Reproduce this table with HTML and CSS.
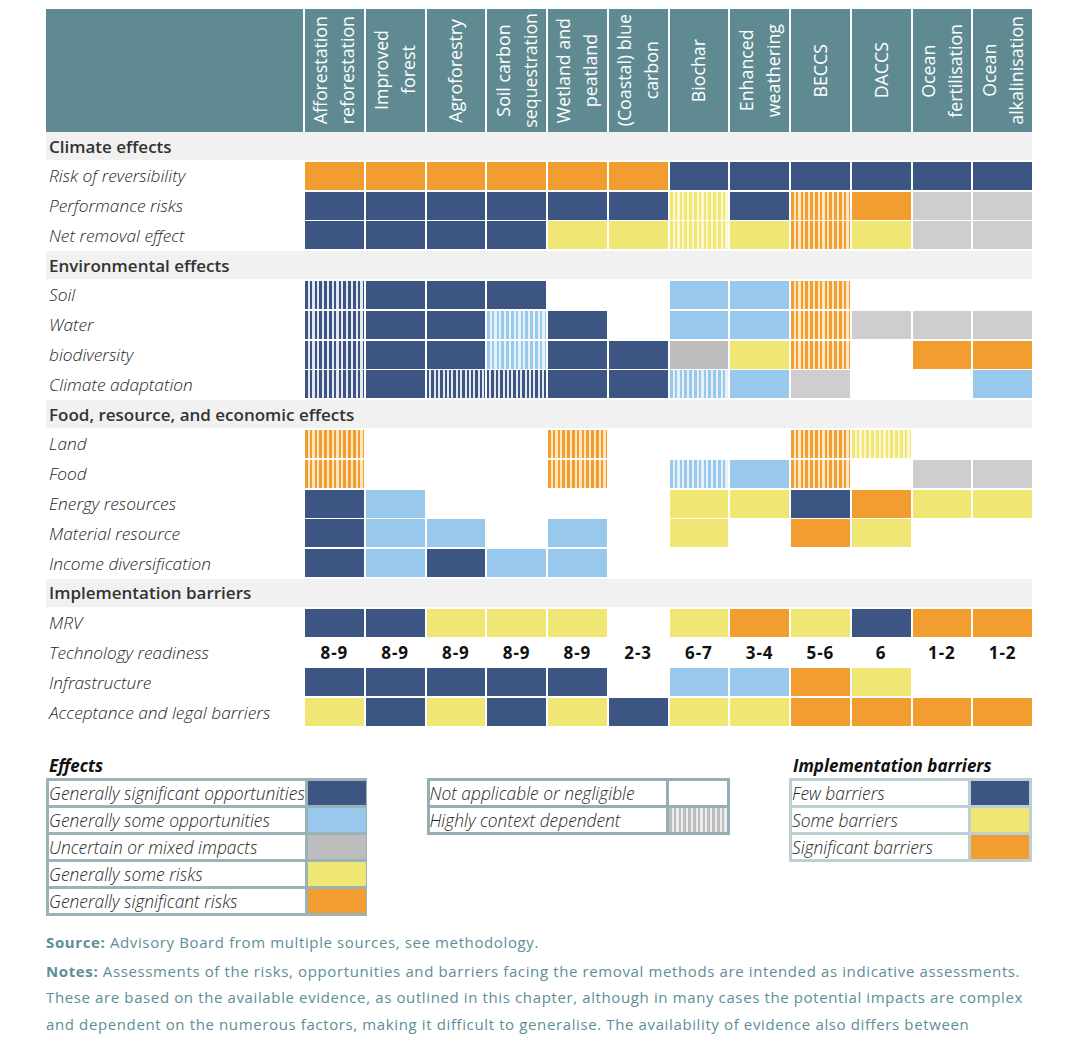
FILE: index.html
```html
<!DOCTYPE html>
<html lang="en">
<head>
<meta charset="utf-8">
<title>Removal methods assessment</title>
<link rel="stylesheet" href="styles.css">
</head>
<body>
<div class="page">
  <div class="matrix">
    <div class="head">
      <div></div>
      <div><span>Afforestation<br>reforestation</span></div>
      <div><span>Improved<br>forest</span></div>
      <div><span>Agroforestry</span></div>
      <div><span>Soil carbon<br>sequestration</span></div>
      <div><span>Wetland and<br>peatland</span></div>
      <div><span>(Coastal) blue<br>carbon</span></div>
      <div><span>Biochar</span></div>
      <div><span>Enhanced<br>weathering</span></div>
      <div><span>BECCS</span></div>
      <div><span>DACCS</span></div>
      <div><span>Ocean<br>fertilisation</span></div>
      <div><span>Ocean<br>alkalinisation</span></div>
    </div>
    <div class="body">
      <div class="band">Climate effects</div>

      <div class="lab">Risk of reversibility</div>
      <div class="o"></div><div class="o"></div><div class="o"></div><div class="o"></div><div class="o"></div><div class="o"></div>
      <div class="d"></div><div class="d"></div><div class="d"></div><div class="d"></div><div class="d"></div><div class="d"></div>

      <div class="lab">Performance risks</div>
      <div class="d"></div><div class="d"></div><div class="d"></div><div class="d"></div><div class="d"></div><div class="d"></div>
      <div class="yh"></div><div class="d"></div><div class="oh"></div><div class="o"></div><div class="g2"></div><div class="g2"></div>

      <div class="lab">Net removal effect</div>
      <div class="d"></div><div class="d"></div><div class="d"></div><div class="d"></div><div class="y"></div><div class="y"></div>
      <div class="yh"></div><div class="y"></div><div class="oh"></div><div class="y"></div><div class="g2"></div><div class="g2"></div>

      <div class="band">Environmental effects</div>

      <div class="lab">Soil</div>
      <div class="dh"></div><div class="d"></div><div class="d"></div><div class="d"></div><div></div><div></div>
      <div class="l"></div><div class="l"></div><div class="oh"></div><div></div><div></div><div></div>

      <div class="lab">Water</div>
      <div class="dh"></div><div class="d"></div><div class="d"></div><div class="lh"></div><div class="d"></div><div></div>
      <div class="l"></div><div class="l"></div><div class="oh"></div><div class="g2"></div><div class="g2"></div><div class="g2"></div>

      <div class="lab">biodiversity</div>
      <div class="dh"></div><div class="d"></div><div class="d"></div><div class="lh"></div><div class="d"></div><div class="d"></div>
      <div class="g"></div><div class="y"></div><div class="oh"></div><div></div><div class="o"></div><div class="o"></div>

      <div class="lab">Climate adaptation</div>
      <div class="dh"></div><div class="d"></div><div class="dh dense"></div><div class="dh dense"></div><div class="d"></div><div class="d"></div>
      <div class="lh"></div><div class="l"></div><div class="g2"></div><div></div><div></div><div class="l"></div>

      <div class="band">Food, resource, and economic effects</div>

      <div class="lab">Land</div>
      <div class="oh"></div><div></div><div></div><div></div><div class="oh"></div><div></div>
      <div></div><div></div><div class="oh"></div><div class="yh"></div><div></div><div></div>

      <div class="lab">Food</div>
      <div class="oh"></div><div></div><div></div><div></div><div class="oh"></div><div></div>
      <div class="lh"></div><div class="l"></div><div class="oh"></div><div></div><div class="g2"></div><div class="g2"></div>

      <div class="lab">Energy resources</div>
      <div class="d"></div><div class="l"></div><div></div><div></div><div></div><div></div>
      <div class="y"></div><div class="y"></div><div class="d"></div><div class="o"></div><div class="y"></div><div class="y"></div>

      <div class="lab">Material resource</div>
      <div class="d"></div><div class="l"></div><div class="l"></div><div></div><div class="l"></div><div></div>
      <div class="y"></div><div></div><div class="o"></div><div class="y"></div><div></div><div></div>

      <div class="lab">Income diversification</div>
      <div class="d"></div><div class="l"></div><div class="d"></div><div class="l"></div><div class="l"></div><div></div>
      <div></div><div></div><div></div><div></div><div></div><div></div>

      <div class="band">Implementation barriers</div>

      <div class="lab">MRV</div>
      <div class="d"></div><div class="d"></div><div class="y"></div><div class="y"></div><div class="y"></div><div></div>
      <div class="y"></div><div class="o"></div><div class="y"></div><div class="d"></div><div class="o"></div><div class="o"></div>

      <div class="lab">Technology readiness</div>
      <div class="num">8-9</div><div class="num">8-9</div><div class="num">8-9</div><div class="num">8-9</div><div class="num">8-9</div><div class="num">2-3</div>
      <div class="num">6-7</div><div class="num">3-4</div><div class="num">5-6</div><div class="num">6</div><div class="num">1-2</div><div class="num">1-2</div>

      <div class="lab">Infrastructure</div>
      <div class="d"></div><div class="d"></div><div class="d"></div><div class="d"></div><div class="d"></div><div></div>
      <div class="l"></div><div class="l"></div><div class="o"></div><div class="y"></div><div></div><div></div>

      <div class="lab">Acceptance and legal barriers</div>
      <div class="y"></div><div class="d"></div><div class="y"></div><div class="d"></div><div class="y"></div><div class="d"></div>
      <div class="y"></div><div class="y"></div><div class="o"></div><div class="o"></div><div class="o"></div><div class="o"></div>
    </div>
  </div>

  <div class="legend">
    <div class="lt t1">Effects</div>
    <div class="lt t3">Implementation barriers</div>

    <div class="lbox b1">
      <div class="tx">Generally significant opportunities</div><div class="d"></div>
      <div class="tx">Generally some opportunities</div><div class="l"></div>
      <div class="tx">Uncertain or mixed impacts</div><div class="g"></div>
      <div class="tx">Generally some risks</div><div class="y"></div>
      <div class="tx">Generally significant risks</div><div class="o"></div>
    </div>

    <div class="lbox b2">
      <div class="tx">Not applicable or negligible</div><div class="w"></div>
      <div class="tx">Highly context dependent</div><div class="gh"></div>
    </div>

    <div class="lbox b3">
      <div class="tx">Few barriers</div><div class="d"></div>
      <div class="tx">Some barriers</div><div class="y"></div>
      <div class="tx">Significant barriers</div><div class="o"></div>
    </div>
  </div>

  <div class="notes">
    <p class="src"><b>Source:</b> Advisory Board from multiple sources, see methodology.</p>
    <p><b>Notes:</b> Assessments of the risks, opportunities and barriers facing the removal methods are intended as indicative assessments. These are based on the available evidence, as outlined in this chapter, although in many cases the potential impacts are complex and dependent on the numerous factors, making it difficult to generalise. The availability of evidence also differs between</p>
  </div>
</div>
</body>
</html>
```

FILE: styles.css
```css
* { box-sizing: border-box; }

html, body {
  margin: 0;
  background: #ffffff;
}

body {
  font-family: "Open Sans", "Noto Sans", "DejaVu Sans", sans-serif;
  color: #3a3a3a;
  overflow: hidden;
}

.page {
  width: 1080px;
  height: 1046px;
  padding: 9px 0 0 46px;
}

.matrix {
  width: 986px;
}

.head,
.body {
  display: grid;
  grid-template-columns: 257px repeat(12, 58.75px);
  column-gap: 2px;
}

.head {
  height: 123px;
}

.head > div {
  background: #5f8a92;
  color: #ffffff;
  display: flex;
  align-items: center;
  justify-content: center;
}

.head span {
  writing-mode: vertical-rl;
  transform: rotate(180deg);
  font-size: 17.8px;
  line-height: 27px;
  text-align: center;
  white-space: nowrap;
}

.body {
  grid-auto-rows: 28px;
  row-gap: 1.8px;
}

.band {
  grid-column: 1 / -1;
  background: #f1f1f1;
  color: #333333;
  font-size: 17px;
  font-weight: 600;
  padding-left: 3px;
  display: flex;
  align-items: center;
  white-space: nowrap;
}

.lab {
  font-size: 17.3px;
  font-style: italic;
  font-weight: 300;
  padding-left: 3px;
  display: flex;
  align-items: center;
  white-space: nowrap;
  color: #262626;
}

.num {
  font-size: 17px;
  font-weight: 700;
  letter-spacing: 1px;
  color: #111111;
  display: flex;
  align-items: center;
  justify-content: center;
}

/* cell colours */
.d { background: #3d5583; }
.l { background: #99c8ed; }
.g { background: #bdbdbd; }
.g2 { background: #cfcdce; }
.y { background: #efe674; }
.o { background: #f29d2f; }
.w { background: #ffffff; }

.dh { background: repeating-linear-gradient(90deg, #3d5583 0 2.6px, #e4e8f0 2.6px 4.8px); }
.dh.dense { background: repeating-linear-gradient(90deg, #3d5583 0 2.4px, #e4e8f0 2.4px 4.4px); }
.lh { background: repeating-linear-gradient(90deg, #99c8ed 0 2.6px, #e6f2fb 2.6px 4.8px); }
.yh { background: repeating-linear-gradient(90deg, #efe674 0 2.6px, #fbf7cf 2.6px 4.8px); }
.oh { background: repeating-linear-gradient(90deg, #f29d2f 0 2.6px, #fce6bf 2.6px 4.8px); }
.gh { background: repeating-linear-gradient(90deg, #bdbdbd 0 2.6px, #ececec 2.6px 4.8px); }

/* legends */
.legend {
  width: 986px;
  margin-top: 27px;
  display: grid;
  grid-template-columns: 321px 303px 243px;
  grid-template-rows: 24px auto;
  justify-content: space-between;
  row-gap: 1px;
}

.lt {
  grid-row: 1;
  font-size: 17px;
  font-weight: 700;
  font-style: italic;
  color: #111111;
  display: flex;
  align-items: center;
  white-space: nowrap;
}

.t1 { grid-column: 1; padding-left: 3px; }
.t3 { grid-column: 3; padding-left: 4px; }

.lbox {
  grid-row: 2;
  align-self: start;
  display: grid;
  grid-template-columns: 1fr 58px;
  grid-auto-rows: 24px;
  gap: 3px;
  padding: 3px;
  background: #9bb3b7;
}

.b1 { grid-column: 1; }
.b2 { grid-column: 2; background: #94afb4; }
.b3 { grid-column: 3; background: #bccfd3; }

.lbox .tx {
  background: #ffffff;
  font-size: 17.4px;
  font-style: italic;
  font-weight: 300;
  color: #262626;
  padding-left: 0;
  display: flex;
  align-items: center;
  white-space: nowrap;
}

/* notes */
.notes {
  width: 992px;
  margin-top: 13px;
  color: #5c8e97;
  font-size: 15px;
  letter-spacing: 0.62px;
  line-height: 26.5px;
}

.notes p {
  margin: 0;
}

.notes .src {
  margin-bottom: 2px;
}

.notes b {
  font-weight: 700;
}
```
